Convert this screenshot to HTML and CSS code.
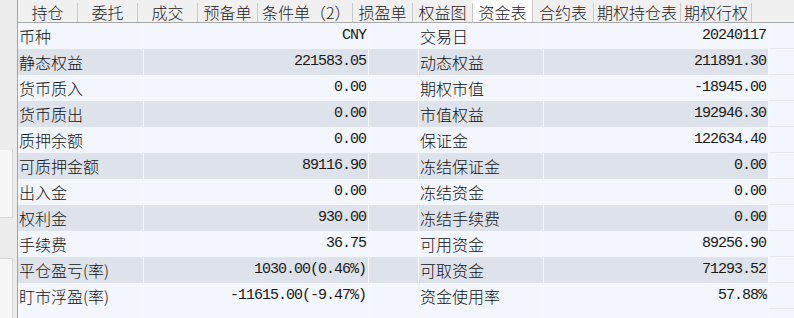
FILE: index.html
```html
<!DOCTYPE html>
<html>
<head>
    <meta charset="utf-8">
    <title>资金表</title>
    <link rel="stylesheet" href="styles.css">
</head>
<body>

<div class="window">
    <div class="side">
        <div class="side-panel"></div>
        <div class="side-panel lower"></div>
    </div>
    <div class="main">
        <div class="tabs">
            <div class="tab">持仓</div>
            <div class="tab">委托</div>
            <div class="tab">成交</div>
            <div class="tab">预备单</div>
            <div class="tab tab-cond">条件单（2）</div>
            <div class="tab">损盈单</div>
            <div class="tab">权益图</div>
            <div class="tab active">资金表</div>
            <div class="tab tab-contract">合约表</div>
            <div class="tab tab-opt-pos">期权持仓表</div>
            <div class="tab tab-opt-ex">期权行权</div>
        </div>

        <div class="fund-table">
            <div class="row">
                <div class="label">币种</div><div class="value">CNY</div><div class="gap"></div>
                <div class="label">交易日</div><div class="value">20240117</div><div class="filler"></div>
            </div>
            <div class="row alt">
                <div class="label">静态权益</div><div class="value">221583.05</div><div class="gap"></div>
                <div class="label">动态权益</div><div class="value">211891.30</div><div class="filler"></div>
            </div>
            <div class="row">
                <div class="label">货币质入</div><div class="value">0.00</div><div class="gap"></div>
                <div class="label">期权市值</div><div class="value">-18945.00</div><div class="filler"></div>
            </div>
            <div class="row alt">
                <div class="label">货币质出</div><div class="value">0.00</div><div class="gap"></div>
                <div class="label">市值权益</div><div class="value">192946.30</div><div class="filler"></div>
            </div>
            <div class="row">
                <div class="label">质押余额</div><div class="value">0.00</div><div class="gap"></div>
                <div class="label">保证金</div><div class="value">122634.40</div><div class="filler"></div>
            </div>
            <div class="row alt">
                <div class="label">可质押金额</div><div class="value">89116.90</div><div class="gap"></div>
                <div class="label">冻结保证金</div><div class="value">0.00</div><div class="filler"></div>
            </div>
            <div class="row">
                <div class="label">出入金</div><div class="value">0.00</div><div class="gap"></div>
                <div class="label">冻结资金</div><div class="value">0.00</div><div class="filler"></div>
            </div>
            <div class="row alt">
                <div class="label">权利金</div><div class="value">930.00</div><div class="gap"></div>
                <div class="label">冻结手续费</div><div class="value">0.00</div><div class="filler"></div>
            </div>
            <div class="row">
                <div class="label">手续费</div><div class="value">36.75</div><div class="gap"></div>
                <div class="label">可用资金</div><div class="value">89256.90</div><div class="filler"></div>
            </div>
            <div class="row alt">
                <div class="label">平仓盈亏(率)</div><div class="value">1030.00(0.46%)</div><div class="gap"></div>
                <div class="label">可取资金</div><div class="value">71293.52</div><div class="filler"></div>
            </div>
            <div class="row">
                <div class="label">盯市浮盈(率)</div><div class="value">-11615.00(-9.47%)</div><div class="gap"></div>
                <div class="label">资金使用率</div><div class="value">57.88%</div><div class="filler"></div>
            </div>
            <!-- empty trailing row -->
            <div class="row">
                <div class="label"></div><div class="value"></div><div class="gap"></div>
                <div class="label"></div><div class="value"></div><div class="filler"></div>
            </div>
        </div>
    </div>
</div>

</body>
</html>
```

FILE: styles.css
```css
* {
    box-sizing: border-box;
}
body {
    margin: 0;
    background: #f0f0f0;
    font-family: "Noto Sans CJK SC", sans-serif;
    font-size: 16px;
    color: #111;
    overflow: hidden;
}

.window {
    display: flex;
    height: 318px;
}

/* strip of the neighbouring pane */
.side {
    width: 17px;
    background: #ececec;
    display: flex;
    flex-direction: column;
    gap: 40px;
    padding-top: 150px;
}
.side-panel {
    height: 68px;
    width: 13px;
    background: #f7f7f7;
    border-right: 1px solid #d6d6d6;
    border-bottom: 1px solid #d6d6d6;
}
.side-panel.lower {
    flex: 1;
    border-top: 1px solid #d6d6d6;
    border-bottom: none;
}

.main {
    flex: 1;
    border-left: 1px solid #a3a3a3;
    display: flex;
    flex-direction: column;
    overflow: hidden;
}

/* tab strip */
.tabs {
    display: flex;
    height: 23px;
    padding-top: 3px;
    background: #f0f0f0;
    border-bottom: 1px solid #a8a8a8;
}
.tab {
    width: 60px;
    height: 19px;
    line-height: 19px;
    text-align: center;
    font-weight: 300;
    color: #222;
    border-right: 1px solid #c9c9c9;
    white-space: nowrap;
}
.tab-cond {
    width: 95px;
    text-align: left;
    padding-left: 4px;
}
.tab-contract { width: 61px; }
.tab-opt-pos { width: 87px; }
.tab-opt-ex { width: 71px; }
.tab.active {
    background: #fff;
    margin-top: -3px;
    height: 22px;
    padding-top: 3px;
}

/* fund grid */
.fund-table {
    flex: 1;
    background: #f3f6fc;
}
.row {
    display: grid;
    grid-template-columns: 126px 225px 50px 125px 225px 1fr;
    height: 26px;
    line-height: 26px;
    background: #f3f6fc;
}
.row.alt {
    background: #dee2ea;
}
.row > div {
    border-right: 1px solid #f5f7fc;
    white-space: nowrap;
    overflow: hidden;
}
.label {
    padding-left: 1px;
    font-weight: 300;
}
.value {
    text-align: right;
    padding-right: 2px;
    font-family: "Liberation Mono", monospace;
    font-size: 15px;
    letter-spacing: -1px;
    color: #1a1a1a;
}
.row .filler {
    background: #f3f6fc;
    border-bottom: 1px solid #e4e8ef;
    border-right: none;
}
```
